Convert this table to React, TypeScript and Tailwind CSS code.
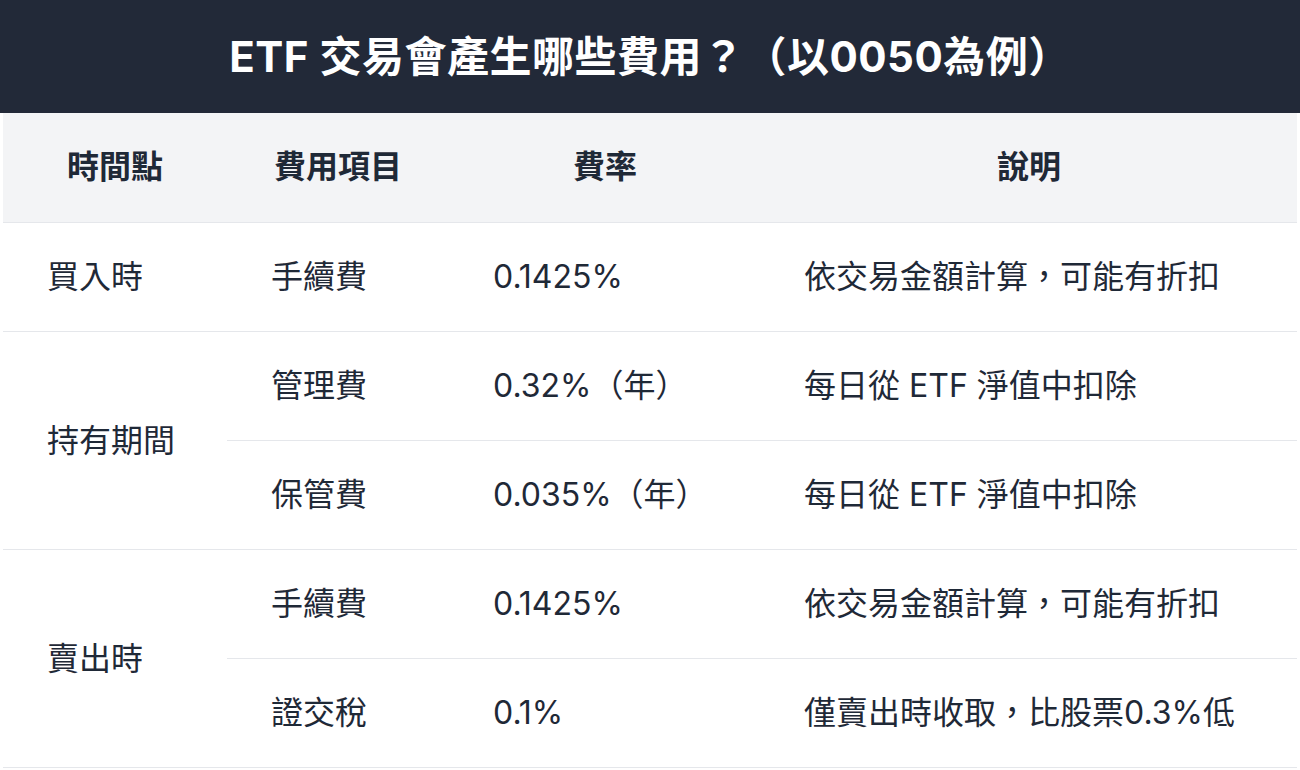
import React from "react";

const font = { fontFamily: 'Inter, "Noto Sans CJK TC", sans-serif' };

export default function App() {
  const td = "h-[109px] px-[44px] text-[32px] leading-[45px] text-[#1f2937] align-middle";
  const th = "h-[109px] text-[32px] font-bold text-[#1f2937] text-center";
  return (
    <div className="w-[1300px] h-[770px] bg-white" style={font}>
      <div className="h-[113px] bg-[#222938] flex items-center justify-center">
        <h1 className="text-white text-[42px] font-bold tracking-[0.5px]">ETF 交易會產生哪些費用？（以0050為例）</h1>
      </div>
      <div className="px-[3px]">
        <table className="w-full border-collapse table-fixed">
          <colgroup>
            <col className="w-[224px]" />
            <col className="w-[222px]" />
            <col className="w-[312px]" />
            <col />
          </colgroup>
          <thead>
            <tr className="bg-[#f3f4f6] border-b border-[#e5e7eb]">
              <th className={th}>時間點</th>
              <th className={th}>費用項目</th>
              <th className={th}>費率</th>
              <th className={th}>說明</th>
            </tr>
          </thead>
          <tbody>
            <tr className="border-b border-[#e5e7eb]">
              <td className={td}>買入時</td>
              <td className={td}>手續費</td>
              <td className={td}>0.1425%</td>
              <td className={td + " pl-[43px]"}>依交易金額計算，可能有折扣</td>
            </tr>
            <tr className="border-b border-[#e5e7eb]">
              <td className={td + " border-b border-[#e5e7eb]"} rowSpan={2}>持有期間</td>
              <td className={td}>管理費</td>
              <td className={td}>0.32%（年）</td>
              <td className={td + " pl-[43px]"}>每日從 ETF 淨值中扣除</td>
            </tr>
            <tr className="border-b border-[#e5e7eb]">
              <td className={td}>保管費</td>
              <td className={td}>0.035%（年）</td>
              <td className={td + " pl-[43px]"}>每日從 ETF 淨值中扣除</td>
            </tr>
            <tr className="border-b border-[#e5e7eb]">
              <td className={td + " border-b border-[#e5e7eb]"} rowSpan={2}>賣出時</td>
              <td className={td}>手續費</td>
              <td className={td}>0.1425%</td>
              <td className={td + " pl-[43px]"}>依交易金額計算，可能有折扣</td>
            </tr>
            <tr className="border-b border-[#e5e7eb]">
              <td className={td}>證交稅</td>
              <td className={td}>0.1%</td>
              <td className={td + " pl-[43px]"}>僅賣出時收取，比股票0.3%低</td>
            </tr>
          </tbody>
        </table>
      </div>
    </div>
  );
}
